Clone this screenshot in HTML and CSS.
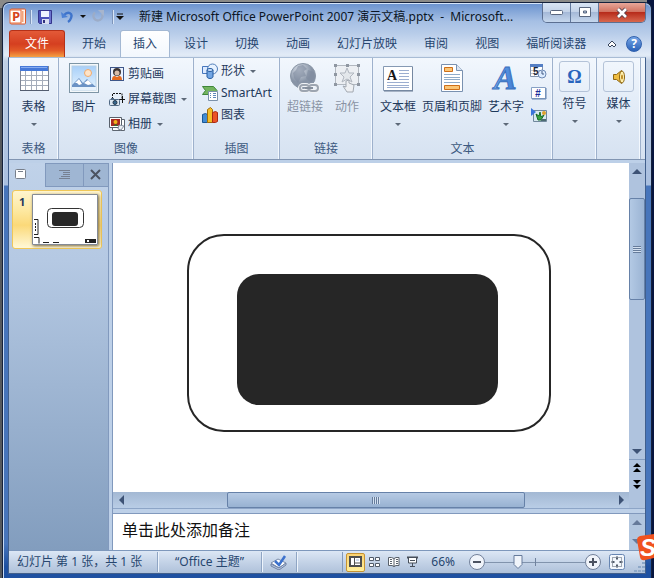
FILE: index.html
```html
<!DOCTYPE html>
<html lang="zh-CN">
<head>
<meta charset="utf-8">
<title>新建 Microsoft Office PowerPoint 2007 演示文稿.pptx</title>
<link rel="stylesheet" href="styles.css">
</head>
<body>
<div class="window">
  <header class="titlebar">
    <svg class="app-icon" width="17" height="17" viewBox="0 0 17 17" aria-hidden="true">
      <rect x="1.500" y="1" width="15" height="15" rx="1" fill="#fff3eb" stroke="#d9582c"/>
      <rect x="1" y="2" width="11" height="13" fill="#fff" stroke="#e86a38"/>
      <path d="M13.500 3v11" stroke="#f2a37b" stroke-width="2"/>
      <text x="3" y="13" class="icon-p">P</text>
    </svg>
    <span class="qat-line"></span>
    <button class="qat save" aria-label="保存"><svg width="14" height="14" viewBox="0 0 14 14"><path d="M.5.500h13v13h-12l-1-1z" fill="#4a51b8" stroke="#34358c"/><path d="M3 1h8v6H3z" fill="#edf3ff"/><path d="M4 9h7v5H4z" fill="#d8def0"/><path d="M5 10h2v3H5z" fill="#30317f"/><path d="M12 1v12" stroke="#8e97e5"/></svg></button>
    <button class="qat undo" aria-label="撤消"><svg width="13" height="13" viewBox="0 0 13 13"><path d="M3 5C7 1 12 3 10 8c-.500 2-1.500 3-3 4" fill="none" stroke="#3f74cb" stroke-width="2.400"/><path d="M0 2l1 6 6-1z" fill="#4b80d5"/></svg></button>
    <button class="qat" aria-label="撤消选项"><span class="caret black"></span></button>
    <button class="qat redo" aria-label="重复"><svg width="13" height="13" viewBox="0 0 13 13"><path d="M3 2.500a4.500 4.500 0 1 0 7 1.500" fill="none" stroke="#9cacc7" stroke-width="2.400"/><path d="M6 0h6v6z" fill="#a7b5cd"/></svg></button>
    <span class="qat-line"></span>
    <button class="qat custom" aria-label="自定义快速访问工具栏"><svg width="8" height="8" viewBox="0 0 8 8"><path d="M1 1h6" stroke="#111"/><path d="M0 3h8L4 7z" fill="#111"/></svg></button>
    <h1 class="title">新建 Microsoft Office PowerPoint 2007 演示文稿.pptx&nbsp; -&nbsp; Microsoft...</h1>
    <div class="window-buttons">
      <button class="wb min" aria-label="最小化"><svg width="13" height="6"><rect x=".5" y=".5" width="12" height="4" rx="1" fill="#fff" stroke="#59667e"/></svg></button>
      <button class="wb max" aria-label="最大化"><svg width="12" height="11"><path fill-rule="evenodd" d="M.5.500h11v9H.5zM4.500 4h3v2h-3z" fill="#fff" stroke="#59667e"/></svg></button>
      <button class="wb close" aria-label="关闭"><svg width="14" height="12" viewBox="0 0 14 12"><path d="M3 2l8 8m0-8l-8 8" stroke="#58404a" stroke-width="4.500"/><path d="M3 2l8 8m0-8l-8 8" stroke="#fff" stroke-width="2.600"/></svg></button>
    </div>
  </header>

  <nav class="tabs">
    <button class="tab file">文件</button>
    <button class="tab">开始</button>
    <button class="tab active">插入</button>
    <button class="tab">设计</button>
    <button class="tab">切换</button>
    <button class="tab">动画</button>
    <button class="tab">幻灯片放映</button>
    <button class="tab">审阅</button>
    <button class="tab">视图</button>
    <button class="tab">福昕阅读器</button>
    <span class="spring"></span>
    <button class="collapse" aria-label="功能区最小化"><svg width="10" height="8" viewBox="0 0 10 8"><path d="M5 1l4 4-2 2-2-2-2 2-2-2z" fill="#fff" stroke="#39465c"/></svg></button>
    <button class="help" aria-label="帮助">?</button>
  </nav>

  <div class="frame">
    <section class="ribbon">
      <div class="group g-table">
        <div class="items">
          <button class="big"><span class="pic"><svg width="30" height="30" viewBox="0 0 30 30"><rect x="1.500" y="3.500" width="28" height="24" fill="#fff" stroke="#7f8797"/><path d="M1 3h28v5H1z" fill="#4679d8"/><path d="M2 4h26v1H2z" fill="#86abf0"/><path d="M6.500 8v19m6-19v19m5-19v19m6-19v19M2 12.500h27m-27 5h27m-27 5h27" stroke="#a5adbb"/><path d="M1 27.500h29" stroke="#535d6f"/></svg></span>表格<span class="caret"></span></button>
        </div>
        <div class="caption">表格</div>
      </div>

      <div class="group g-image">
        <div class="items">
          <button class="big"><span class="pic"><svg width="30" height="30" viewBox="0 0 30 30"><defs><linearGradient id="sky" x2="0" y2="1"><stop stop-color="#a8cff8"/><stop offset="1" stop-color="#e6f5ff"/></linearGradient></defs><rect x=".5" y=".5" width="29" height="29" fill="#f4f8fa" stroke="#7d95a5"/><rect x="3" y="3" width="24" height="24" fill="url(#sky)" stroke="#b6d0e5"/><circle cx="19" cy="10" r="3.500" fill="#ffe4c7" stroke="#efaa6d"/><path d="M3 22l7-7 4 5 4-4 9 8H3z" fill="#6b93c5"/><path d="M6 20l4-4 3 5-3 1-2-2zM15 20l4-3 4 4-4 1z" fill="#fff"/><path d="M3 24h24v3H3z" fill="#e6f2fc"/></svg></span>图片</button>
          <div class="rows">
            <button class="row"><svg width="16" height="16" viewBox="0 0 16 16"><rect x="1.500" y="1.500" width="13" height="13" fill="#eaf2ff" stroke="#3e5688"/><circle cx="8" cy="6" r="4" fill="#3d3433"/><circle cx="8" cy="7" r="2.500" fill="#d9bca7"/><path d="M3 14c0-4 2-5 5-3 3-2 5-1 5 3z" fill="#e56b1f"/></svg>剪贴画</button>
            <button class="row"><svg width="16" height="16" viewBox="0 0 16 16"><path d="M3.500 8V2.500H13V8" fill="none" stroke="#111" stroke-dasharray="2 1"/><path d="M10 8.500h6M13.500 5v7" stroke="#111"/><rect x=".5" y="8.500" width="10" height="6" rx="1" fill="#dce7f2" stroke="#506984"/><circle cx="6" cy="11.500" r="2" fill="#36678e" stroke="#26394d"/><path d="M2 7.500h3" stroke="#506984"/></svg>屏幕截图<span class="caret"></span></button>
            <button class="row"><svg width="16" height="16" viewBox="0 0 16 16"><path d="M3.500 3.500h12v11h-12z" fill="#fff" stroke="#5e6671"/><path d="M.5 1.500h12v10H.500z" fill="#fff" stroke="#59616c"/><path d="M2 3h9v7H2z" fill="#a72822"/><circle cx="6.500" cy="6" r="2" fill="#f0b519"/><path d="M4 10l3-2 2 2z" fill="#306f27"/><path d="M9 13l1-4 5 1-3 4z" fill="#e9edf2" stroke="#8a93a2"/></svg>相册<span class="caret"></span></button>
          </div>
        </div>
        <div class="caption">图像</div>
      </div>

      <div class="group g-illus">
        <div class="items">
          <div class="rows tight">
            <button class="row"><svg width="16" height="16" viewBox="0 0 16 16"><path d="M.5 3.500h8v7h-8z" fill="#dceaff" stroke="#4777bd"/><circle cx="10.500" cy="6" r="5" fill="#e7f2ff" stroke="#507db9"/><path d="M5 7v7c1 2 5 2 6 0V7z" fill="#73a6e4" stroke="#255b9f"/><ellipse cx="8" cy="7" rx="3" ry="1.500" fill="#cfe4ff" stroke="#255b9f"/></svg>形状<span class="caret"></span></button>
            <button class="row"><svg width="16" height="16" viewBox="0 0 16 16"><path d="M.5 1.500h11l3.500 4-4 4H.500l3-4z" fill="#73b45f" stroke="#3e863a"/><path d="M6.500 6.500h9v9h-9z" fill="#fff" stroke="#7b91aa"/><path d="M8 8.500h1m2 0h3m-6 2h1m2 0h3m-6 2h1m2 0h3" stroke="#5d88ba"/></svg>SmartArt</button>
            <button class="row"><svg width="16" height="16" viewBox="0 0 16 16"><path d="M.5 7.500l3-1 2 1v8h-5z" fill="#438bd2" stroke="#195796"/><path d="M5.500 2.500l3-2 2 2v13h-5z" fill="#f4bd28" stroke="#a16d09"/><path d="M10.500 5.500l3-1 2 1v9l-2 1h-3z" fill="#eb5427" stroke="#aa2815"/></svg>图表</button>
          </div>
        </div>
        <div class="caption">插图</div>
      </div>

      <div class="group g-link">
        <div class="items">
          <button class="big" disabled><span class="pic"><svg width="30" height="30" viewBox="0 0 30 30"><defs><radialGradient id="globe" cx=".35" cy=".25"><stop stop-color="#d9e0e9"/><stop offset="1" stop-color="#8894a6"/></radialGradient></defs><circle cx="13" cy="13" r="12.500" fill="url(#globe)" stroke="#8995a5"/><path d="M8 3l5-1 4 4-3 2 2 5-5 1-3 6-4-5-1-5 3-3zM18 7l6 2 1 6-4 5-5-5z" fill="#7e8b9e" opacity=".6"/><rect x="10" y="22" width="9" height="6" rx="3" fill="none" stroke="#f1f3f6" stroke-width="4"/><rect x="19" y="22" width="9" height="6" rx="3" fill="none" stroke="#f1f3f6" stroke-width="4"/><rect x="10" y="22" width="9" height="6" rx="3" fill="none" stroke="#9da5b0" stroke-width="2"/><rect x="19" y="22" width="9" height="6" rx="3" fill="none" stroke="#9da5b0" stroke-width="2"/><path d="M15 25h8" stroke="#858e9b" stroke-width="2"/></svg></span>超链接</button>
          <button class="big" disabled><span class="pic"><svg width="28" height="30" viewBox="0 0 28 30"><path d="M2.500 2.500h23v19h-23z" fill="#eceff3" stroke="#b2b8c0"/><path d="M14 5l2 5h5l-4 4 2 5-5-3-5 3 2-5-4-4h5z" fill="#e3e7eb" stroke="#b1b7c0"/><path d="M1 1h3v3H1zm12 0h3v3h-3zm11 0h3v3h-3zM1 10h3v3H1zm23 0h3v3h-3zM1 20h3v3H1zm23 0h3v3h-3z" fill="#8f97a2"/><path d="M13 18v6l-3-1 4 6h6l1-7-5-2v-3z" fill="#eef0f3" stroke="#a3a9b1"/></svg></span>动作</button>
        </div>
        <div class="caption">链接</div>
      </div>

      <div class="group g-text">
        <div class="items">
          <button class="big"><span class="pic"><svg width="30" height="30" viewBox="0 0 30 30"><path d="M.5 3.500h29v24H.500z" fill="#fff" stroke="#8599b3"/><path d="M30 4v24H1" fill="none" stroke="#65768f"/><text x="4" y="17" class="icon-serif">A</text><path d="M16 7.500h10m-10 3h10m-10 3h10m-10 3h10M4 19.500h22m-22 3h22m-22 2h22" stroke="#9caed0"/></svg></span>文本框<span class="caret"></span></button>
          <button class="big"><span class="pic"><svg width="22" height="30" viewBox="0 0 22 30"><path d="M.5 1.500h15l6 6v21H.500z" fill="#fff" stroke="#7991b0"/><path d="M15.500 1.500v6h6" fill="#dbe5f2" stroke="#7991b0"/><path d="M3.500 4.500h8v4h-8zM3.500 22.500h15v4h-15z" fill="#fac576" stroke="#ce6f19"/><path d="M3 11.500h16m-16 3h16m-16 2h16m-16 3h16" stroke="#8eabc9"/></svg></span>页眉和页脚</button>
          <button class="big"><span class="pic"><svg width="30" height="30" viewBox="0 0 30 30"><defs><linearGradient id="art"><stop stop-color="#7db6f2"/><stop offset="1" stop-color="#3b76cf"/></linearGradient></defs><text x="3" y="26" class="icon-art" fill="url(#art)">A</text></svg></span>艺术字<span class="caret"></span></button>
          <div class="mini">
            <button aria-label="日期和时间"><svg width="17" height="16" viewBox="0 0 17 16"><path d="M.5 1.500h12v12H.500z" fill="#fff" stroke="#8294ad"/><path d="M0 1h13v3H0z" fill="#557fc4"/><path d="M1 7.500h12M1 10.500h12M4.500 4v9" stroke="#c0c9d5"/><text x="3" y="12" class="icon-five">5</text><circle cx="12" cy="11" r="4" fill="#dcecff" stroke="#6d89b4"/><path d="M12 8v3h2" fill="none" stroke="#425b83"/></svg></button>
            <button aria-label="幻灯片编号"><svg width="16" height="16" viewBox="0 0 16 16"><path d="M.5 2.500h14v11H.500z" fill="#fff" stroke="#87a1c5"/><path d="M15 3v11H1" fill="none" stroke="#6584af"/><text x="4" y="12" class="icon-hash">#</text></svg></button>
            <button aria-label="对象"><svg width="16" height="16" viewBox="0 0 16 16"><path d="M2.500 3.500h13v11h-13z" fill="#d8e8ef" stroke="#71889c"/><path d="M0 1l5 4-5 4z" fill="#3b74db"/><path d="M5 7l3 2 1-4 1 5 3-2-3 5H7z" fill="#3ba440" stroke="#176c25"/><circle cx="13" cy="6" r="2" fill="#dda02a"/><path d="M10 12h5v2h-5z" fill="#4c6b72"/></svg></button>
          </div>
        </div>
        <div class="caption">文本</div>
      </div>

      <div class="group g-side">
        <div class="items"><button class="big boxed"><span class="pic"><span class="omega">Ω</span></span>符号<span class="caret"></span></button></div>
      </div>
      <div class="group g-side">
        <div class="items"><button class="big boxed"><span class="pic"><svg width="14" height="16" viewBox="0 0 14 16"><path d="M1.500 5.500h3l5-4v13l-5-4h-3z" fill="#efbd42" stroke="#8f6713"/><ellipse cx="10" cy="8" rx="2.500" ry="6" fill="#fff0ae" stroke="#8f6713"/><ellipse cx="10" cy="8" rx="1" ry="2.500" fill="#bd8922"/></svg></span>媒体<span class="caret"></span></button></div>
      </div>
    </section>

    <main class="workspace">
      <aside class="outline">
        <div class="pane-tabs">
          <button class="pane-tab on" aria-label="幻灯片"><svg width="12" height="12"><rect x=".5" y=".5" width="10" height="9" rx="1" fill="#fff" stroke="#777f8b"/><path d="M3 2.500h5" stroke="#777f8b"/></svg></button>
          <button class="pane-tab" aria-label="大纲"><svg width="12" height="10"><path d="M0 .5h11M4 2.500h7M4 4.500h7M2 6.500h9M0 8.500h11" stroke="#768091"/></svg></button>
          <button class="pane-tab x" aria-label="关闭"><svg width="12" height="12"><path d="M1 1l9 9m0-9l-9 9" stroke="#4b5361" stroke-width="2"/></svg></button>
        </div>
        <button class="thumb">
          <span class="num">1</span>
          <svg class="mini-slide" width="66" height="51" viewBox="0 0 66 51"><path d="M.5.500h65v50H.500z" fill="#fff" stroke="#858b95"/><rect x="15.500" y="14.500" width="36" height="19" rx="4" fill="#fff" stroke="#333"/><rect x="20" y="18" width="26" height="14" rx="3" fill="#282828"/><path d="M2 25.500h4v15H2M2 43.500h5v6" fill="none" stroke="#222"/><path d="M3.500 29v9" stroke="#222" stroke-dasharray="2 1"/><path d="M11 48.500h6m4 0h6M53 45.500h11M53 48.500h11" stroke="#222"/><path d="M54 46v3M57 47h7" stroke="#222" stroke-width="2"/></svg>
        </button>
      </aside>

      <section class="editor">
        <div class="canvas">
          <svg class="drawing" width="364" height="198" viewBox="0 0 364 198"><rect x="1" y="1" width="362" height="196" rx="36" fill="#fff" stroke="#262626" stroke-width="2"/><rect x="50" y="40" width="261" height="131" rx="22" fill="#262626"/></svg>
        </div>
        <div class="vscroll">
          <button class="sb" aria-label="向上滚动"><span class="arrow up"></span></button>
          <span class="vthumb"><i class="grip"></i></span>
          <button class="sb low" aria-label="向下滚动"><span class="arrow down"></span></button>
          <button class="page" aria-label="上一张幻灯片"><svg width="8" height="10"><path d="M0 4l4-4 4 4zM0 9l4-4 4 4z"/></svg></button>
          <button class="page" aria-label="下一张幻灯片"><svg width="8" height="10"><path d="M0 1l4 4 4-4zM0 6l4 4 4-4z"/></svg></button>
        </div>
        <div class="hscroll">
          <button class="sb" aria-label="向左滚动"><span class="arrow left"></span></button>
          <span class="track"><span class="hthumb"><i class="grip side"></i></span></span>
          <button class="sb" aria-label="向右滚动"><span class="arrow right"></span></button>
        </div>
        <div class="splitter"></div>
        <textarea class="notes" aria-label="备注">单击此处添加备注</textarea>
        <div class="nscroll">
          <button class="sb" aria-label="备注向上滚动"><span class="arrow up dim"></span></button>
          <button class="sb" aria-label="备注向下滚动"><span class="arrow down dim"></span></button>
        </div>
      </section>
    </main>

    <footer class="status">
      <span class="cell count">幻灯片 第 1 张，共 1 张</span>
      <span class="cell theme">“Office 主题”</span>
      <button class="cell spell" aria-label="拼写检查"><svg width="18" height="15" viewBox="0 0 18 15"><path d="M1 8l7-4 8 4-7 5z" fill="#fff" stroke="#7b8caa"/><path d="M1 9v2l8 4 7-5V8l-7 5z" fill="#b9c8e1" stroke="#6f82a5"/><path d="M5 6l4 4 6-9" fill="none" stroke="#3d72cd" stroke-width="2.500"/></svg></button>
      <span class="spring"></span>
      <span class="status-line"></span>
      <button class="view on" aria-label="普通视图"><svg width="13" height="12"><rect x="1" y="1" width="11" height="9" fill="#fff" stroke="#4e4f4f" stroke-width="2"/><path d="M5.500 1v9M6 7h6" stroke="#4e4f4f" stroke-width="1"/><path d="M7 3h3v2H7z" fill="#d0ddef"/></svg></button>
      <button class="view" aria-label="幻灯片浏览"><svg width="12" height="11"><path d="M.5.500h4v3h-4zM6.500.500h4v3h-4zM.500 6.500h4v3h-4zM6.500 6.500h4v3h-4z" fill="#fff" stroke="#515b69"/></svg></button>
      <button class="view" aria-label="阅读视图"><svg width="12" height="12"><path d="M.5 1.500h3l2.500 1 2-1h3v8H8l-2 1-2-1H.500z" fill="#fff" stroke="#59616b"/><path d="M6 2v9M2 3.500h2m-2 2h2m-2 2h2m4-4h2m-2 2h2m-2 2h2" stroke="#59616b"/></svg></button>
      <button class="view" aria-label="幻灯片放映"><svg width="12" height="12"><path d="M0 1.500h11" stroke="#474f5b" stroke-width="2"/><path d="M1.500 2v5h8V2" fill="#fff" stroke="#474f5b"/><path d="M3 4.500h5M5.500 7v3M3 10.500h5" stroke="#474f5b"/></svg></button>
      <button class="percent">66%</button>
      <button class="round" aria-label="缩小"><svg width="16" height="16"><circle cx="8" cy="8" r="7.500" fill="#f0f4fa" stroke="#72809a"/><path d="M4 8h8" stroke="#4b5260" stroke-width="2"/></svg></button>
      <input class="zoom" type="range" min="0" max="100" value="31" aria-label="显示比例">
      <button class="round" aria-label="放大"><svg width="16" height="16"><circle cx="8" cy="8" r="7.500" fill="#f0f4fa" stroke="#72809a"/><path d="M4 8h8M8 4v8" stroke="#4b5260" stroke-width="2"/></svg></button>
      <button class="fit" aria-label="使幻灯片适应当前窗口"><svg width="16" height="16"><rect x=".5" y=".5" width="15" height="15" rx="2" fill="#f3f7fc" stroke="#6685b2"/><path d="M3.500 3.500h9v9h-9z" fill="none" stroke="#4f5968" stroke-dasharray="1 1"/><path d="M8 2v4M8 10v4M2 8h4m4 0h4M7 4.500h2M7 11.500h2M4.500 7v2M11.500 7v2" stroke="#4f5968"/></svg></button>
      <svg class="resize" width="11" height="11" aria-hidden="true"><path d="M8 0h3v2H8zM4 4h3v2H4zM8 4h3v2H8zM0 8h3v2H0zM4 8h3v2H4zM8 8h3v2H8z" fill="#8ea8c8"/></svg>
    </footer>
  </div>
</div>
<svg class="ime" width="17" height="28" viewBox="0 0 17 28" aria-hidden="true"><path d="M0 6q0-3 3-4l14-2v24L8 26q-4 1-5-3z" fill="#f0521f"/><text x="3" y="22" class="icon-ime">S</text></svg>
</body>
</html>
```
FILE: styles.css
```css
* { box-sizing: border-box; }
body {
  margin: 0;
  padding: 2px 2px 0;
  min-height: 100vh;
  display: flex;
  overflow: hidden;
  font: 12px/16px "Noto Sans", "Noto Sans CJK SC", sans-serif;
  color: #1e395b;
  background:
    linear-gradient(#8a8a88, #8a8a88) 0 0 / 99% 8px no-repeat,
    linear-gradient(90deg, #55585c 0, #55585c 50%, #07153f 50%);
  position: relative;
}
button {
  font: inherit;
  color: inherit;
  background: none;
  border: 0;
  padding: 0;
  display: flex;
  align-items: center;
  justify-content: center;
  white-space: nowrap;
}
svg { display: block; flex: none; }
.spring { flex: 1; }

.window {
  flex: 1;
  min-width: 0;
  display: flex;
  flex-direction: column;
  border: 1px solid #14213c;
  border-bottom: 0;
  border-radius: 7px 7px 0 0;
  padding: 0 5px 4px;
  box-shadow: inset 0 1px #d5e4f8, inset 1px 0 #c7d9f1;
  background:
    linear-gradient(#6991ce 0, #a5bfe4 18px, #b7cce9 30px, #e2ebf7 52px, #bfcfe5 58px, #a9bfdf 182px, #4775bb 183px, #4775bb 94%, #1e50a1 98%);
}

.titlebar { display: flex; align-items: center; height: 27px; padding-left: 1px; }
.qat-line { width: 1px; height: 14px; background: #7e95ba; box-shadow: 1px 0 #d8e5f6; }
.app-icon + .qat-line { margin: 0 7px 0 4px; }
.undo { margin-left: 9px; }
.qat .caret { margin: 0 6px; }
.redo { margin-right: 7px; }
.custom { margin-left: 3px; }
.title {
  flex: 1;
  min-width: 0;
  margin: 0 0 0 15px;
  overflow: hidden;
  white-space: nowrap;
  font-size: 12px;
  font-weight: 400;
  color: #0b1524;
}
.window-buttons {
  display: flex;
  align-self: flex-start;
  height: 20px;
  border: 1px solid #5c6f91;
  border-top: 0;
  border-radius: 0 0 5px 5px;
  overflow: hidden;
}
.wb { width: 28px; background: linear-gradient(#d8e4f4, #c3d2e8 45%, #a5b9d8 50%, #c6d7ed); border-right: 1px solid #61789c; }
.wb.close { width: 46px; border: 0; background: linear-gradient(#e7a799, #d27462 45%, #b72c1b 50%, #d8674e); }

.tabs { display: flex; gap: 1px; height: 27px; padding-left: 1px; }
.tab { padding: 0 13px; color: #27466f; border-radius: 3px 3px 0 0; }
.tab.file {
  padding: 0 15px;
  margin-right: 3px;
  color: #fff;
  border: 1px solid #b53118;
  border-bottom: 0;
  background: linear-gradient(#e35a38, #d53f20 50%, #e25a28 75%, #f5a143);
}
.tab.active { padding: 0 12px; border: 1px solid #a3b8d3; border-bottom: 0; background: linear-gradient(#fff, #f2f7fd); }
.help {
  align-self: center;
  width: 16px;
  height: 16px;
  margin: 0 4px 0 8px;
  border-radius: 50%;
  border: 1px solid #3161ae;
  background: linear-gradient(#75a5e6, #2b62b8);
  color: #fff;
  font-weight: 700;
}

.frame {
  flex: 1;
  display: flex;
  flex-direction: column;
  border: 1px solid #415f8c;
  border-top-color: #a8bcd5;
  min-width: 0;
}
.ribbon {
  display: flex;
  height: 102px;
  background: linear-gradient(#f2f7fd, #e4edf8 40%, #d6e2f1);
  border-bottom: 1px solid #8195b2;
}
.group { display: flex; flex-direction: column; border-right: 1px solid #9eb1cc; box-shadow: inset -1px 0 #f3f8fe; }
.items { display: flex; flex: 1; align-items: flex-start; padding-top: 5px; }
.caption { height: 20px; line-height: 20px; text-align: center; color: #3c5980; }
.big { flex-direction: column; }
.big .pic { display: flex; align-items: center; justify-content: center; height: 30px; margin-bottom: 6px; }
.big .caret { margin-top: 8px; }
.big:disabled { color: #8993a3; }
.caret { width: 0; border: 3px solid transparent; border-top-color: #5d6978; border-bottom: 0; }
.caret.black { border-top-color: #111; }
.g-table { width: 50px; }
.g-table .items { justify-content: center; }
.g-image { width: 135px; }
.g-image .items { padding-left: 10px; gap: 10px; }
.rows { display: flex; flex-direction: column; gap: 9px; padding-top: 3px; }
.row { gap: 3px; justify-content: flex-start; height: 16px; }
.row .caret { margin-left: 2px; }
.rows.tight { gap: 6px; padding-top: 0; }
.g-illus { width: 86px; }
.g-illus .items { padding-left: 8px; }
.g-link { width: 93px; }
.g-link .items { padding-left: 7px; gap: 10px; }
.g-text { width: 180px; }
.g-text .items { padding-left: 7px; gap: 6px; }
.mini { display: flex; flex-direction: column; gap: 6px; }
.g-side { width: 44px; }
.g-side .items { justify-content: center; padding-top: 3px; }
.boxed .pic { width: 31px; height: 31px; margin-bottom: 4px; border: 1px solid #b4c3d8; border-radius: 3px; }
.omega { font: 700 18px/20px "Liberation Serif", serif; color: #2864bd; }

.icon-p { font: 700 13px "Open Sans", sans-serif; fill: #d6451d; }
.icon-serif { font: 700 14px "Liberation Serif", serif; fill: #161616; }
.icon-art { font: italic 700 34px "Liberation Serif", serif; stroke: #3a6fbd; }
.icon-five { font: 700 10px "Liberation Sans", sans-serif; fill: #1e2636; }
.icon-hash { font: italic 700 10px "Liberation Sans", sans-serif; fill: #1c2e9b; }
.icon-ime { font: italic 700 24px "Liberation Sans", sans-serif; fill: #fff; }

.workspace { flex: 1; display: flex; padding-top: 3px; background: #bdd0e8; min-height: 0; }
.outline {
  width: 100px;
  margin-right: 3px;
  border-right: 1px solid #8199bd;
  background: linear-gradient(#c0d2e9, #b5c9e3 25%, #829dbe);
}
.pane-tabs { display: flex; height: 24px; }
.pane-tab { width: 38px; background: #9fb6d3; border: 1px solid #8199bd; border-width: 1px 0 1px 1px; }
.pane-tab.on { width: 36px; background: none; border: 0; justify-content: flex-start; padding-left: 6px; }
.pane-tab.x { flex: 1; }
.thumb {
  width: 90px;
  height: 59px;
  margin: 3px 0 0 3px;
  padding: 3px 3px 3px 6px;
  justify-content: space-between;
  align-items: flex-start;
  border: 1px solid #f0c758;
  border-radius: 3px;
  background: linear-gradient(#fff5cf, #fde8a0 35%, #fbd979 60%, #fff8d7);
}
.num { font-weight: 700; font-size: 11px; }
.mini-slide { box-shadow: 1px 1px 3px #7b6b43; }

.editor {
  flex: 1;
  min-width: 0;
  display: grid;
  grid-template-columns: 1fr 16px;
  grid-template-rows: 1fr 16px 6px 36px;
  border-left: 1px solid #8199bd;
}
.canvas { display: flex; align-items: center; justify-content: center; padding: 10px 4px 0 0; background: #fff; min-height: 0; }
.vscroll { grid-row: 1 / 3; grid-column: 2; display: flex; flex-direction: column; background: #afc3de; }
.sb { flex: none; min-width: 16px; height: 17px; }
.vthumb {
  height: 102px;
  margin: 18px 0 auto;
  display: flex;
  align-items: center;
  justify-content: center;
  border: 1px solid #6681a8;
  border-radius: 2px;
  background: linear-gradient(90deg, #b3c9e4, #9bb4d4);
}
.low { border-bottom: 1px solid #849dc0; }
.page { height: 16px; }
.page:last-child { margin-bottom: 16px; }
.hscroll { grid-column: 1; grid-row: 2; display: flex; background: linear-gradient(#a3b8d3, #b9cde6); }
.hscroll .sb { height: 16px; }
.track { flex: 1; display: flex; padding: 0 17% 0 19%; }
.hthumb {
  flex: 1;
  display: flex;
  align-items: center;
  justify-content: center;
  border: 1px solid #6681a8;
  border-radius: 2px;
  background: linear-gradient(#b6cae4, #98b2d2);
}
.grip { width: 8px; height: 7px; background: repeating-linear-gradient(#667c9b 0 1px, #d4e1f1 1px 2px); }
.grip.side { background: repeating-linear-gradient(90deg, #667c9b 0 1px, #d4e1f1 1px 2px); }
.arrow { border: 4px solid transparent; }
.arrow.up { border-width: 0 5px 5px; border-bottom-color: #3d5275; }
.arrow.down { border-width: 5px 5px 0; border-top-color: #3d5275; }
.arrow.left { border-width: 5px 5px 5px 0; border-right-color: #3d5275; }
.arrow.right { border-width: 5px 0 5px 5px; border-left-color: #3d5275; }
.arrow.dim { opacity: .65; }
.splitter { grid-column: 1 / 3; border-top: 1px solid #8da5c7; border-bottom: 1px solid #8199bd; }
.notes {
  grid-column: 1;
  width: 100%;
  height: 36px;
  padding: 5px 9px;
  border: 0;
  resize: none;
  overflow: hidden;
  outline: 0;
  font: 16px/22px "Noto Sans", "Noto Sans CJK SC", sans-serif;
  color: #111;
}
.nscroll { display: flex; flex-direction: column; justify-content: space-between; background: #b2c6df; }

.status {
  height: 23px;
  display: flex;
  align-items: center;
  border-top: 1px solid #7e98bc;
  background: linear-gradient(#dce7f5, #c4d3e7 50%, #afc1da);
  color: #27466f;
}
.cell { height: 20px; line-height: 20px; border-right: 1px solid #8fa5c4; box-shadow: 1px 0 #edf4fc; white-space: nowrap; }
.count { width: 149px; padding-left: 8px; }
.theme { width: 104px; text-align: center; }
.spell { width: 35px; }
.status-line { width: 1px; height: 20px; background: #8299ba; margin-right: 3px; }
.view { width: 19px; height: 19px; }
.view.on { border: 1px solid #c69332; border-radius: 2px; background: linear-gradient(#fbd371, #ffef9b); }
.percent { margin: 0 14px 0 9px; }
.zoom {
  appearance: none;
  width: 100px;
  height: 16px;
  margin: 0;
  background:
    linear-gradient(#70829e, #70829e) 50% 50% / 1px 8px no-repeat,
    linear-gradient(#8193ac, #8193ac) 50% 50% / 100% 1px no-repeat;
}
.zoom::-webkit-slider-thumb {
  appearance: none;
  width: 10px;
  height: 14px;
  background: url("data:image/svg+xml,%3Csvg xmlns='http://www.w3.org/2000/svg' width='10' height='14'%3E%3Cpath d='M1 .5h8v9l-4 4-4-4z' fill='%23f0f4fa' stroke='%23667b9b'/%3E%3C/svg%3E") no-repeat;
}
.fit { margin: 0 9px 0 8px; }
.resize { align-self: flex-end; }

.ime { position: absolute; right: 0; bottom: 16px; }
```
